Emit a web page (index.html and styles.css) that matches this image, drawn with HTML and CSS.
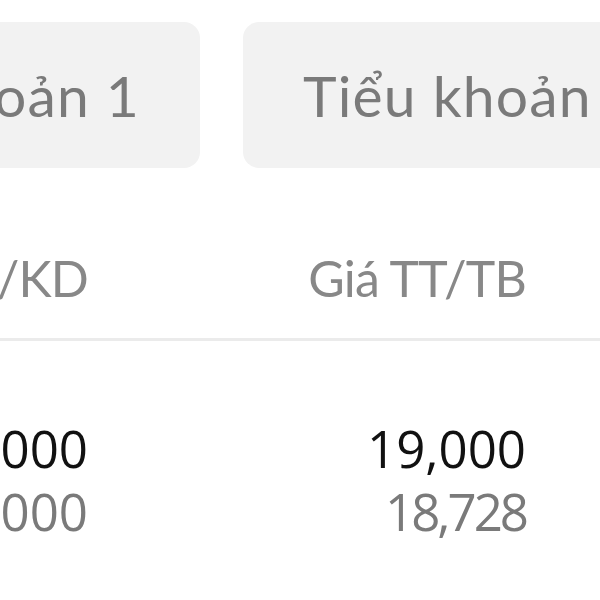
FILE: index.html
```html
<!DOCTYPE html>
<html lang="vi">
<head>
    <meta charset="UTF-8">
    <meta name="viewport" content="width=device-width, initial-scale=1.0">
    <title>Danh mục</title>
    <link rel="stylesheet" href="styles.css">
</head>
<body>
<div class="screen">

    <div class="tabs">
        <div class="tab">Tiểu khoản 1</div>
        <div class="tab">Tiểu khoản 2</div>
    </div>

    <div class="table-head">
        <div class="cell">SL TT/KD</div>
        <div class="cell">Giá TT/TB</div>
    </div>

    <div class="table-row">
        <div class="cell">
            <div class="main">1,000</div>
            <div class="sub">1,000</div>
        </div>
        <div class="cell">
            <div class="main">19,000</div>
            <div class="sub">18,728</div>
        </div>
    </div>

</div>
</body>
</html>
```

FILE: styles.css
```css
body {
    margin: 0;
    background: #ffffff;
    overflow: hidden;
}
.screen {
    width: 1200px;
    margin-left: -252px;
}
.tabs {
    display: flex;
    gap: 43px;
    margin-top: 22px;
}
.tab {
    width: 452px;
    height: 146px;
    box-sizing: border-box;
    padding-left: 60px;
    background: #f2f2f2;
    border-radius: 16px;
    display: flex;
    align-items: center;
    font-family: "Lato", sans-serif;
    font-size: 57px;
    letter-spacing: 1.2px;
    color: #7a7a7a;
    white-space: nowrap;
    overflow: hidden;
}
.tab:first-child {
    justify-content: flex-end;
    padding-left: 0;
    padding-right: 60px;
}
.table-head {
    display: flex;
    margin-top: 80px;
    padding-bottom: 30px;
    border-bottom: 3px solid #ebebeb;
}
.cell {
    width: 340px;
    text-align: right;
    white-space: nowrap;
}
.cell + .cell {
    width: 438px;
}
.table-head .cell {
    font-family: "Lato", sans-serif;
    font-size: 50px;
    letter-spacing: -0.8px;
    color: #888888;
    line-height: 60px;
}
.table-row {
    display: flex;
    padding-top: 76px;
    font-family: "Open Sans", sans-serif;
    font-size: 51px;
    line-height: 63px;
}
.main {
    color: #111111;
}
.sub {
    color: #7a7a7a;
}
.cell + .cell .sub {
    letter-spacing: -3px;
}
```
